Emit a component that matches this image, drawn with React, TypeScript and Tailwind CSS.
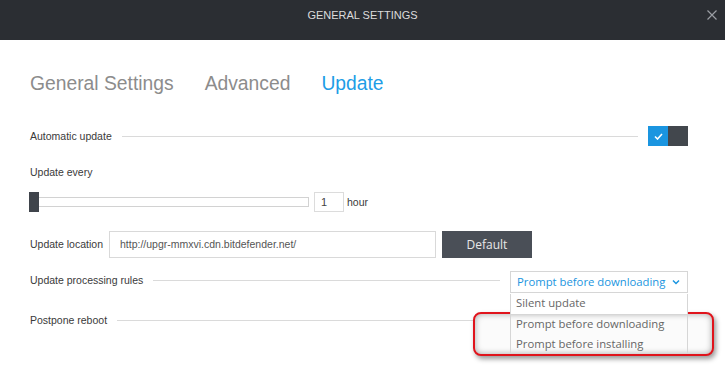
import React from "react";

const lab = "font-['Liberation_Sans',Arial,sans-serif] text-[10.5px] text-[#3a3a3a] leading-none whitespace-nowrap";
const seg = "font-['Open_Sans','Noto_Sans',sans-serif]";

export default function App() {
  return (
    <div className="w-[725px] h-[383px] bg-white relative overflow-hidden">
      {/* header */}
      <div className="h-[40px] bg-[#2b2e33] relative flex items-center justify-center">
        <span className="font-['Liberation_Sans',Arial,sans-serif] text-[11px] text-[#dcdcdc] -mt-[10px]">GENERAL SETTINGS</span>
        <svg className="absolute right-[8px] top-[10px]" width="10" height="10" viewBox="0 0 10 10">
          <path d="M0.5 0.5 L9.5 9.5 M9.5 0.5 L0.5 9.5" stroke="#9a9ea4" strokeWidth="1.2" />
        </svg>
      </div>

      <div className="pl-[30px] pr-[37px] flex flex-col">
        {/* tabs */}
        <div className="pt-[33px] h-[55px] flex items-center gap-[31px] font-['Liberation_Sans',Arial,sans-serif] text-[19.3px] leading-[22px]">
          <span className="text-[#8c8c8c]">General Settings</span>
          <span className="text-[#8c8c8c]">Advanced</span>
          <span className="text-[#1e9de6]">Update</span>
        </div>

        {/* automatic update */}
        <div className="mt-[31px] h-[20px] flex items-center">
          <span className={lab}>Automatic update</span>
          <div className="flex-1 h-px bg-[#dadada] ml-[10px] mr-[10px]" />
          <div className="flex h-[20px]">
            <div className="w-[20px] h-[20px] bg-[#1a95e0] flex items-center justify-center">
              <svg width="9" height="7" viewBox="0 0 9 7">
                <path d="M1 3.5 L3.5 6 L8 1" stroke="white" strokeWidth="1.6" fill="none" />
              </svg>
            </div>
            <div className="w-[20px] h-[20px] bg-[#42474d]" />
          </div>
        </div>

        {/* update every */}
        <div className="mt-[16px] h-[20px] flex items-center">
          <span className={lab}>Update every</span>
        </div>

        {/* slider */}
        <div className="mt-[10px] h-[20px] flex items-center -ml-[1px]">
          <div className="w-[10px] h-[20px] bg-[#3f444b]" />
          <div className="w-[270px] h-[10px] border border-l-0 border-[#d2d2d2]" />
          <div className="ml-[5px] w-[30px] h-[20px] border border-[#dcdcdc] flex items-center pl-[6px] font-['Liberation_Sans',Arial,sans-serif] text-[11px] text-[#444]">1</div>
          <span className={lab + " ml-[3px]"}>hour</span>
        </div>

        {/* update location */}
        <div className="mt-[19px] h-[27px] flex items-center">
          <span className={lab}>Update location</span>
          <div className="ml-[6px] w-[327px] h-[27px] border border-[#d9d9d9] flex items-center pl-[10px] font-['Liberation_Sans',Arial,sans-serif] text-[10.5px] text-[#555]">
            http://upgr-mmxvi.cdn.bitdefender.net/
          </div>
          <div className={"ml-[6px] w-[90px] h-[27px] bg-[#4a4f57] flex items-center justify-center text-[12px] text-[#e8e8e8] " + seg}>
            Default
          </div>
        </div>

        {/* processing rules */}
        <div className="mt-[13px] h-[22px] flex items-center">
          <span className={lab + " -mt-[4px]"}>Update processing rules</span>
          <div className="flex-1 h-px bg-[#dadada] ml-[10px] mr-[10px] -mt-[4px]" />
          <div className="relative w-[178px] h-[22px]">
            <div className={"w-full h-full border border-[#d6d6d6] flex items-center pl-[6px] pr-[6px] text-[11.3px] text-[#1a95e0] " + seg}>
              <span className="flex-1 whitespace-nowrap">Prompt before downloading</span>
              <svg width="8" height="6" viewBox="0 0 8 6" className="mr-[1px]">
                <path d="M1 1.5 L4 4.5 L7 1.5" stroke="#1a95e0" strokeWidth="1.5" fill="none" />
              </svg>
            </div>
            <div className="absolute left-[-37px] top-[41px] w-[241px] h-[44px] rounded-[8px] border-2 border-[#e0141c] bg-[#fbfbfb] shadow-[2px_3px_5px_rgba(0,0,0,0.4),inset_0_0_6px_rgba(0,0,0,0.35)] z-10" />
            <div className={"absolute left-0 top-[23px] w-full h-[60px] border-x border-[#d6d6d6] flex flex-col text-[11.3px] text-[#666] z-20 " + seg}>
              <div className="h-[20px] flex items-center pl-[5px] bg-white">Silent update</div>
              <div className="h-[20px] flex items-center pl-[5px] mt-[1px]">Prompt before downloading</div>
              <div className="h-[20px] flex items-center pl-[5px]">Prompt before installing</div>
            </div>
          </div>
        </div>

        {/* postpone reboot */}
        <div className="mt-[17px] h-[20px] flex items-center">
          <span className={lab}>Postpone reboot</span>
          <div className="flex-1 h-px bg-[#dadada] ml-[10px] mr-[212px]" />
        </div>
      </div>
    </div>
  );
}
